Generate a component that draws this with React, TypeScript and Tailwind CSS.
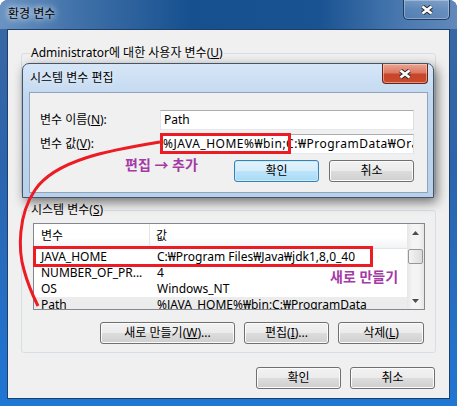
import React from "react";

const rows = [
  ["JAVA_HOME", "C:₩Program Files₩Java₩jdk1,8,0_40"],
  ["NUMBER_OF_PR...", "4"],
  ["OS", "Windows_NT"],
  ["Path", "%JAVA_HOME%₩bin;C:₩ProgramData"],
];

const XGlyph = () => (
  <svg width="14" height="10" viewBox="0 0 14 10">
    <path d="M2.5 1.5 L11.5 8.5 M11.5 1.5 L2.5 8.5" stroke="#2a2a2a" strokeWidth="4.4" />
    <path d="M2.5 1.5 L11.5 8.5 M11.5 1.5 L2.5 8.5" stroke="#ffffff" strokeWidth="2.6" />
  </svg>
);

function Btn({ children, w, primary }: { children: React.ReactNode; w: string; primary?: boolean }) {
  return (
    <div
      className={`${w} h-[22px] flex items-center justify-center rounded-[3px] border leading-none ${
        primary
          ? "border-[#3c7fb1] bg-[linear-gradient(180deg,#e3f3fc_0%,#d3edfb_50%,#bce4fb_50%,#a9daf4_100%)] shadow-[inset_0_0_0_1px_#c4ebfe]"
          : "border-[#707070] bg-[linear-gradient(180deg,#f2f2f2_0%,#ebebeb_50%,#dddddd_50%,#cfcfcf_100%)] shadow-[inset_0_0_0_1px_#fbfbfb]"
      }`}
    >
      {children}
    </div>
  );
}

function Tri({ down }: { down?: boolean }) {
  return (
    <svg width="7" height="4" viewBox="0 0 7 4">
      <path d={down ? "M0 0 L7 0 L3.5 4 Z" : "M0 4 L7 4 L3.5 0 Z"} fill="#4d4d4d" />
    </svg>
  );
}

export default function App() {
  return (
    <div className="relative w-[457px] h-[406px] overflow-hidden rounded-t-[8px] flex flex-col bg-[linear-gradient(180deg,#3a68a2_0%,#2c64ad_40%,#1f76d4_100%)] font-['Noto_Sans','Noto_Sans_CJK_KR',sans-serif] text-[12px] text-black">
      {/* title bar */}
      <div className="h-[29px] shrink-0 flex items-start justify-between pl-[8px] pr-[7px] bg-[linear-gradient(90deg,#6a93c2_0%,#4474ab_15%,#16508f_42%,#1a5392_70%,#4a79b0_88%,#6189ba_100%)]">
        <span className="mt-[5px] leading-[18px] [text-shadow:0_0_6px_#fff,0_0_10px_rgba(255,255,255,0.8)]">환경 변수</span>
        <div className="w-[47px] h-[20px] flex items-center justify-center rounded-b-[5px] border border-t-0 border-[#223a5c] bg-[linear-gradient(180deg,rgba(255,255,255,0.22)_0%,rgba(255,255,255,0.08)_50%,rgba(255,255,255,0.03)_100%)] shadow-[inset_0_0_0_1px_rgba(255,255,255,0.3)]">
          <XGlyph />
        </div>
      </div>

      {/* client */}
      <div className="relative flex-1 mx-[7px] mb-[7px] bg-[#f0f0f0] border border-[#1d3f69] flex flex-col">
        <fieldset className="mx-[13px] mt-[15px] h-[150px] border border-[#d5dfe5] rounded-[3px]">
          <legend className="ml-[8px] px-[1px] leading-[16px]">
            Administrator에 대한 사용자 변수(<u>U</u>)
          </legend>
        </fieldset>

        <fieldset className="mx-[13px] mt-[7px] h-[151px] border border-[#d5dfe5] rounded-[3px]">
          <legend className="ml-[8px] px-[1px] leading-[16px]">
            시스템 변수(<u>S</u>)
          </legend>
          <div className="pl-[11px] pr-[10px] flex flex-col">
            <div className="mt-[5px] h-[87px] border border-[#828790] bg-white flex overflow-hidden">
              <div className="flex-1 flex flex-col overflow-hidden">
                <div className="h-[25px] shrink-0 flex items-center bg-[linear-gradient(180deg,#ffffff_0%,#ffffff_55%,#f2f3f5_100%)] border-b border-[#e5e5e5]">
                  <div className="w-[116px] pl-[7px] self-stretch flex items-center border-r border-[#e5e5e5]">변수</div>
                  <div className="pl-[6px]">값</div>
                </div>
                {rows.map(([k, v], i) => (
                  <div
                    key={k}
                    className={`h-[16px] shrink-0 flex items-center whitespace-nowrap ${i === 3 ? "bg-[#ececec]" : ""}`}
                  >
                    <div className="w-[116px] pl-[7px]">{k}</div>
                    <div className="pl-[7px]">{v}</div>
                  </div>
                ))}
              </div>
              <div className="w-[17px] shrink-0 flex flex-col bg-[linear-gradient(90deg,#e6e6e6_0%,#f4f4f4_30%,#f4f4f4_70%,#e6e6e6_100%)]">
                <div className="h-[17px] flex items-center justify-center">
                  <Tri />
                </div>
                <div className="mt-[8px] h-[15px] mx-[1px] rounded-[2px] border border-[#979797] bg-[linear-gradient(90deg,#f4f4f4_0%,#e8e8e8_50%,#dcdcdc_100%)]" />
                <div className="flex-1" />
                <div className="h-[17px] flex items-center justify-center">
                  <Tri down />
                </div>
              </div>
            </div>
            <div className="mt-[12px] mr-[1px] flex justify-end gap-[9px]">
              <Btn w="w-[135px]">
                새로 만들기(<u>W</u>)...
              </Btn>
              <Btn w="w-[85px]">
                편집(<u>I</u>)...
              </Btn>
              <Btn w="w-[86px]">
                삭제(<u>L</u>)
              </Btn>
            </div>
          </div>
        </fieldset>

        <div className="mt-[14px] mr-[14px] flex justify-end gap-[9px]">
          <Btn w="w-[85px]">확인</Btn>
          <Btn w="w-[85px]">취소</Btn>
        </div>

        {/* edit dialog */}
        <div className="absolute left-[14px] top-[33px] w-[412px] h-[135px] flex flex-col rounded-t-[7px] border border-[#44556a] bg-[linear-gradient(180deg,#d6e6f7_0%,#c2d8f0_25%,#b8d0ea_100%)] shadow-[3px_4px_12px_rgba(0,0,0,0.55)]">
          <div className="h-[28px] shrink-0 flex items-start justify-between pl-[7px] pr-[5px]">
            <span className="mt-[6px] leading-[16px] [text-shadow:0_0_6px_rgba(255,255,255,0.9)]">시스템 변수 편집</span>
            <div className="w-[46px] h-[20px] flex items-center justify-center rounded-b-[4px] border border-t-0 border-[#6b2116] bg-[linear-gradient(180deg,#eba593_0%,#dc7a63_45%,#c8452b_55%,#c84a2c_100%)] shadow-[inset_0_0_0_1px_rgba(255,220,210,0.5)]">
              <XGlyph />
            </div>
          </div>
          <div className="flex-1 ml-[6px] mr-[5px] mb-[4px] bg-[#f0f0f0] border border-[#8fa3bb] pt-[17px] pl-[10px] pr-[13px] flex flex-col">
            <div className="h-[20px] flex items-center">
              <div className="w-[120px]">
                변수 이름(<u>N</u>):
              </div>
              <div className="w-[254px] h-[20px] flex items-center px-[3px] bg-white border border-[#abadb3] border-l-[#e2e3ea] border-r-[#dbdfe6] border-b-[#e3e9ef]">
                Path
              </div>
            </div>
            <div className="mt-[4px] h-[20px] flex items-center">
              <div className="w-[120px]">
                변수 값(<u>V</u>):
              </div>
              <div className="w-[254px] h-[20px] flex items-center px-[2px] bg-white border border-[#abadb3] border-l-[#e2e3ea] border-r-[#dbdfe6] border-b-[#e3e9ef] whitespace-nowrap overflow-hidden tracking-[0.5px]">
                %JAVA_HOME%₩bin;C:₩ProgramData₩Oracle
              </div>
            </div>
            <div className="mt-[6px] flex justify-end gap-[10px]">
              <Btn w="w-[85px]" primary>
                확인
              </Btn>
              <Btn w="w-[85px]">취소</Btn>
            </div>
          </div>
        </div>
      </div>

      {/* annotations */}
      <div className="absolute inset-0 pointer-events-none">
        <div className="absolute left-[160px] top-[133px] w-[131px] h-[21px] border-[3px] border-[#ec1c24]" />
        <div className="absolute left-[33px] top-[246px] w-[340px] h-[21px] border-[3px] border-[#ec1c24]" />
        <div className="absolute left-[125px] top-[156px] text-[14px] leading-[18px] font-bold text-[#a43aa5] whitespace-nowrap">
          편집 → 추가
        </div>
        <div className="absolute left-[330px] top-[268px] text-[14px] leading-[18px] font-bold text-[#a43aa5] whitespace-nowrap">
          새로 만들기
        </div>
        <svg className="absolute inset-0" width="457" height="406" viewBox="0 0 457 406">
          <path
            d="M160 142 C 110 150 55 160 35 190 C 18 215 18 250 24 270 C 28 285 34 298 38 306"
            fill="none"
            stroke="#ec1c24"
            strokeWidth="3"
          />
        </svg>
      </div>
    </div>
  );
}
